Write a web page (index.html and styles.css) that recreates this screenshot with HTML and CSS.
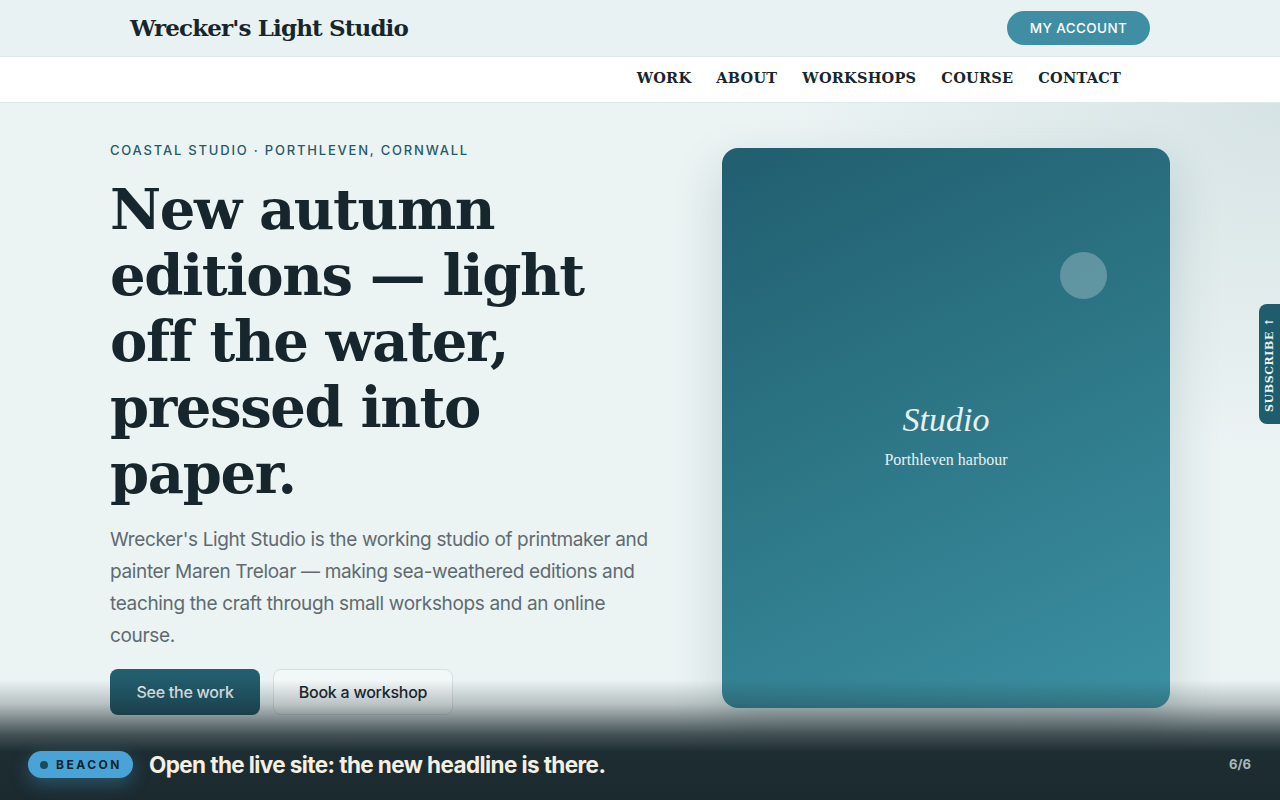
FILE: index.html
```html
<!DOCTYPE html>
<html lang="en">
<head>
<meta charset="utf-8">
<title>Wrecker's Light Studio</title>
<link rel="stylesheet" href="styles.css">
</head>
<body>
<header class="topbar">
  <div class="topbar-inner">
    <a class="logo" href="#">Wrecker's Light Studio</a>
    <a class="account" href="#">MY ACCOUNT</a>
  </div>
</header>
<nav class="navbar">
  <div class="nav-inner">
    <a href="#">WORK</a>
    <a href="#">ABOUT</a>
    <a href="#">WORKSHOPS</a>
    <a href="#">COURSE</a>
    <a href="#">CONTACT</a>
  </div>
</nav>
<main class="hero">
  <div class="hero-inner">
    <section class="hero-text">
      <p class="eyebrow">COASTAL STUDIO · PORTHLEVEN, CORNWALL</p>
      <h1 class="headline">New autumn editions — light off the water, pressed into paper.</h1>
      <p class="lede">Wrecker's Light Studio is the working studio of printmaker and painter Maren Treloar — making sea-weathered editions and teaching the craft through small workshops and an online course.</p>
      <div class="actions">
        <a class="btn btn-primary" href="#">See the work</a>
        <a class="btn btn-ghost" href="#">Book a workshop</a>
      </div>
    </section>
    <figure class="card">
      <span class="sun"></span>
      <figcaption class="card-caption">
        <span class="card-title">Studio</span>
        <span class="card-sub">Porthleven harbour</span>
      </figcaption>
    </figure>
  </div>
</main>
<a class="subscribe" href="#">SUBSCRIBE ↑</a>
<div class="beacon-bar">
  <span class="beacon-pill"><span class="dot"></span>BEACON</span>
  <span class="beacon-msg">Open the live site: the new headline is there.</span>
  <span class="beacon-count">6/6</span>
</div>
</body>
</html>
```

FILE: styles.css
```css
* { box-sizing: border-box; }
html, body { margin: 0; padding: 0; }
body {
  width: 1280px;
  height: 800px;
  overflow: hidden;
  background: #ebf3f3;
  font-family: Inter, "Noto Sans", sans-serif;
  color: #17262c;
  position: relative;
}
a { text-decoration: none; color: inherit; }

.topbar {
  background: #e9f2f2;
  height: 57px;
  border-bottom: 1px solid #dde7e7;
}
.topbar-inner {
  width: 1020px;
  margin: 0 auto;
  height: 56px;
  display: flex;
  align-items: center;
  justify-content: space-between;
}
.logo {
  font-family: "DejaVu Serif", Georgia, serif;
  font-weight: 700;
  font-size: 23px;
  letter-spacing: -0.85px;
  color: #17262c;
  padding-bottom: 2px;
}
.account {
  background: #3f8ea3;
  color: #fff;
  font-size: 13.5px;
  font-weight: 500;
  letter-spacing: 0.4px;
  height: 34px;
  width: 143px;
  border-radius: 17px;
  display: flex;
  align-items: center;
  justify-content: center;
}

.navbar {
  background: #fff;
  height: 46px;
  border-bottom: 1px solid #e0e9e9;
}
.nav-inner {
  width: 1020px;
  margin: 0 auto;
  height: 45px;
  display: flex;
  justify-content: flex-end;
  align-items: center;
  gap: 25px;
  padding-right: 29px;
  padding-bottom: 4px;
}
.nav-inner a {
  font-family: "DejaVu Serif", Georgia, serif;
  font-weight: 700;
  font-size: 14.5px;
  letter-spacing: 0.25px;
  color: #17262c;
}

.hero {
  height: 697px;
  background:
    radial-gradient(ellipse 700px 500px at 100% 0%, #d6e3e5 0%, rgba(214,227,229,0) 70%),
    #ebf3f3;
}
.hero-inner {
  width: 1060px;
  margin: 0 auto;
  padding-top: 39px;
  display: grid;
  grid-template-columns: 1fr 448px;
  gap: 62px;
  align-items: start;
}
.eyebrow {
  margin: 0;
  font-size: 13px;
  font-weight: 500;
  letter-spacing: 1.8px;
  color: #245a69;
  line-height: 16px;
}
.headline {
  margin: 18px 0 0;
  font-family: "DejaVu Serif", Georgia, serif;
  font-weight: 700;
  font-size: 56px;
  line-height: 66px;
  letter-spacing: -1.4px;
  color: #17262c;
  max-width: 500px;
}
.lede {
  margin: 18px 0 0;
  font-size: 19px;
  line-height: 32px;
  color: #5f6b70;
  letter-spacing: -0.35px;
}
.actions {
  margin-top: 17px;
  display: flex;
  gap: 13px;
}
.btn {
  height: 46px;
  border-radius: 8px;
  display: flex;
  align-items: center;
  justify-content: center;
  font-size: 16px;
  font-weight: 500;
  letter-spacing: -0.25px;
}
.btn-primary {
  width: 150px;
  background: linear-gradient(180deg, #245f70, #1b4f5e);
  color: #eaf3f3;
}
.btn-ghost {
  width: 180px;
  border: 1px solid #d5dfe0;
  background: rgba(255,255,255,0.35);
  color: #17262c;
}

.card {
  margin: 6px 0 0;
  height: 560px;
  border-radius: 16px;
  background: linear-gradient(155deg, #215e6f 0%, #2c7585 45%, #3b90a2 100%);
  box-shadow: 0 20px 50px rgba(30, 70, 80, 0.18);
  position: relative;
  display: flex;
  align-items: center;
  justify-content: center;
}
.sun {
  position: absolute;
  left: 338px;
  top: 104px;
  width: 47px;
  height: 47px;
  border-radius: 50%;
  background: rgba(255,255,255,0.25);
}
.card-caption {
  display: flex;
  flex-direction: column;
  align-items: center;
  margin-top: 15px;
  color: #e6f1f2;
}
.card-title {
  font-family: "Liberation Serif", "Times New Roman", serif;
  font-style: italic;
  font-size: 34px;
  line-height: 36px;
}
.card-sub {
  margin-top: 13px;
  font-family: "Liberation Serif", "Times New Roman", serif;
  font-size: 16px;
  line-height: 18px;
}

.subscribe {
  position: absolute;
  right: 0;
  top: 304px;
  width: 21px;
  height: 120px;
  background: #1f5d6d;
  color: #eaf3f3;
  font-family: "DejaVu Serif", Georgia, serif;
  font-weight: 700;
  font-size: 11px;
  letter-spacing: 0.6px;
  writing-mode: vertical-rl;
  transform: rotate(180deg);
  border-radius: 0 8px 8px 0;
  display: flex;
  align-items: center;
  justify-content: center;
}

.beacon-bar {
  position: absolute;
  left: 0;
  right: 0;
  bottom: 0;
  height: 120px;
  background: linear-gradient(180deg, rgba(28,43,48,0) 0%, rgba(28,43,48,0.25) 20%, rgba(28,43,48,0.8) 45%, #1d2d32 60%, #1b2a2f 100%);
  display: flex;
  align-items: flex-end;
  padding: 0 29px 22px 28px;
}
.beacon-pill {
  display: flex;
  align-items: center;
  gap: 8px;
  height: 27px;
  padding: 0 11px 0 12px;
  border-radius: 14px;
  background: #4aa3d6;
  color: #12242b;
  font-size: 12px;
  font-weight: 700;
  letter-spacing: 2.5px;
  box-shadow: 0 6px 18px rgba(74,163,214,0.35);
}
.dot {
  width: 8px;
  height: 8px;
  border-radius: 50%;
  background: #1d4a5a;
}
.beacon-msg {
  margin-left: 16px;
  font-size: 22.5px;
  font-weight: 700;
  letter-spacing: -0.6px;
  color: #f3efe2;
  line-height: 27px;
}
.beacon-count {
  margin-left: auto;
  font-size: 13px;
  font-weight: 700;
  color: #a9b6ba;
  line-height: 27px;
}
```
